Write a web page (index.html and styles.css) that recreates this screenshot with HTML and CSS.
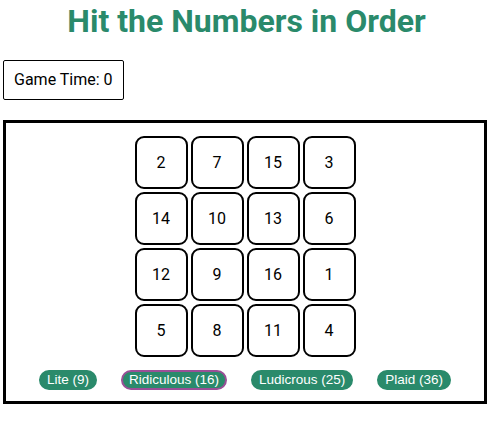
FILE: index.html
```html
<!DOCTYPE html>
<html>
<head>
<meta charset="utf-8">
<link rel="stylesheet" href="styles.css">
</head>
<body>
<h1 class="title">Hit the Numbers in Order</h1>
<div class="timer">Game Time: 0</div>
<div class="board">
  <div class="grid">
    <div class="tile">2</div><div class="tile">7</div><div class="tile">15</div><div class="tile">3</div>
    <div class="tile">14</div><div class="tile">10</div><div class="tile">13</div><div class="tile">6</div>
    <div class="tile">12</div><div class="tile">9</div><div class="tile">16</div><div class="tile">1</div>
    <div class="tile">5</div><div class="tile">8</div><div class="tile">11</div><div class="tile">4</div>
  </div>
  <div class="levels">
    <button class="level">Lite (9)</button>
    <button class="level active">Ridiculous (16)</button>
    <button class="level">Ludicrous (25)</button>
    <button class="level">Plaid (36)</button>
  </div>
</div>
</body>
</html>
```
FILE: styles.css
```css
html, body {
  margin: 0;
  background: #fff;
}
body {
  padding: 0 3px;
  font-family: Roboto, "Liberation Sans", sans-serif;
  color: #000;
}
.title {
  margin: 0;
  padding-top: 3px;
  height: 57px;
  text-align: center;
  font-size: 32px;
  font-weight: 700;
  line-height: 37px;
  color: #2a8a6b;
}
.timer {
  display: inline-block;
  box-sizing: border-box;
  height: 40px;
  padding: 0 10px;
  border: 1px solid #000;
  border-radius: 2px;
  font-size: 16px;
  line-height: 38px;
}
.board {
  margin-top: 20px;
  width: 484px;
  height: 284px;
  box-sizing: border-box;
  border: 3px solid #000;
  padding-top: 13px;
  display: flex;
  flex-direction: column;
  align-items: center;
}
.grid {
  display: grid;
  grid-template-columns: repeat(4, 53px);
  grid-auto-rows: 53px;
  gap: 3px;
}
.tile {
  box-sizing: border-box;
  border: 2px solid #000;
  border-radius: 9px;
  display: flex;
  align-items: center;
  justify-content: center;
  font-size: 16px;
}
.levels {
  margin-top: 13px;
  display: flex;
  gap: 24px;
}
.level {
  box-sizing: border-box;
  height: 20px;
  padding: 0 6px;
  border: 2px solid #2a8a6b;
  border-radius: 10px;
  background: #2a8a6b;
  color: #fff;
  font-family: "Liberation Sans", Arial, sans-serif;
  font-size: 13.5px;
  line-height: 16px;
}
.level.active {
  border-color: #9a4f97;
}
```
